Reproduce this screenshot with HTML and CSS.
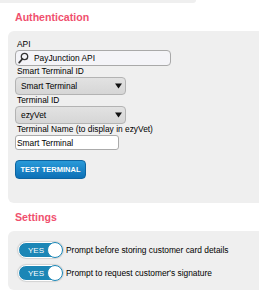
FILE: index.html
```html
<!DOCTYPE html>
<html lang="en">
<head>
  <meta charset="UTF-8">
  <title>Terminal Settings</title>
  <link rel="stylesheet" href="styles.css">
</head>
<body>

  <div class="prev-panel"></div>

  <h2 class="section-title">Authentication</h2>
  <div class="panel auth">
    <label class="field-label">API</label>
    <div class="search-input">
      <svg class="search-icon" width="11" height="12" viewBox="0 0 11 12">
        <circle cx="6.5" cy="4.5" r="3.2" fill="none" stroke="#333" stroke-width="1.3"/>
        <line x1="4.3" y1="7" x2="1.2" y2="10.6" stroke="#333" stroke-width="1.8" stroke-linecap="round"/>
      </svg>
      <span>PayJunction API</span>
    </div>

    <label class="field-label">Smart Terminal ID</label>
    <div class="select-box">
      <span>Smart Terminal</span>
      <svg class="arrow" width="7" height="6" viewBox="0 0 7 6"><polygon points="0,0.5 7,0.5 3.5,5.5" fill="#111"/></svg>
    </div>

    <label class="field-label">Terminal ID</label>
    <div class="select-box">
      <span>ezyVet</span>
      <svg class="arrow" width="7" height="6" viewBox="0 0 7 6"><polygon points="0,0.5 7,0.5 3.5,5.5" fill="#111"/></svg>
    </div>

    <label class="field-label">Terminal Name (to display in ezyVet)</label>
    <input class="text-input" type="text" value="Smart Terminal">

    <button class="btn-test">TEST TERMINAL</button>
  </div>

  <h2 class="section-title">Settings</h2>
  <div class="panel settings">
    <div class="toggle-row">
      <span class="toggle"><span class="toggle-text">YES</span><span class="knob"></span></span>
      <span class="toggle-label">Prompt before storing customer card details</span>
    </div>
    <div class="toggle-row">
      <span class="toggle"><span class="toggle-text">YES</span><span class="knob"></span></span>
      <span class="toggle-label">Prompt to request customer's signature</span>
    </div>
  </div>

</body>
</html>
```

FILE: styles.css
```css
* {
  box-sizing: border-box;
}

html, body {
  margin: 0;
  padding: 0;
  overflow: hidden;
  background: #fff;
  font-family: "Liberation Sans", Arial, sans-serif;
  color: #000;
}

.prev-panel {
  width: 196px;
  height: 3px;
  background: #efefef;
  border-radius: 0 0 6px 0;
}

.section-title {
  margin: 8px 0 8px 0;
  padding-left: 15px;
  font-size: 10.6px;
  line-height: 12px;
  font-weight: bold;
  color: #f0506e;
}

/* panels run off the right edge in the original, so only the left corners are round */
.panel {
  margin-left: 8px;
  background: #efefef;
  border-radius: 6px 0 0 6px;
}

.auth {
  padding: 8px 0 24px 7px;
}

.field-label {
  display: block;
  font-size: 8.4px;
  line-height: 11px;
  padding-left: 2px;
}

.search-input {
  display: flex;
  align-items: center;
  width: 156px;
  height: 16px;
  border: 1px solid #a9a9a9;
  border-radius: 4px;
  background: #f4f4f8;
  padding-left: 2px;
  font-size: 8.4px;
}

.search-icon {
  margin-right: 5px;
}

.select-box {
  display: flex;
  align-items: center;
  justify-content: space-between;
  width: 111px;
  height: 18px;
  border: 1px solid #b3b3b3;
  border-radius: 4px;
  background: linear-gradient(#e2e2e2, #d6d6d6);
  padding: 0 3px 0 5px;
  font-size: 8.4px;
}

.arrow {
  display: block;
}

.text-input {
  display: block;
  width: 104px;
  height: 15px;
  margin: 0;
  padding: 0 1px;
  border: 1px solid #ababab;
  border-radius: 3px;
  background: #fff;
  font-family: inherit;
  font-size: 8.4px;
  color: #000;
}

.btn-test {
  display: block;
  width: 71px;
  height: 19px;
  margin-top: 10px;
  padding: 0;
  border: 1px solid #0d64a0;
  border-radius: 4px;
  background: linear-gradient(#2a9ad9, #0c70b6);
  color: #fff;
  font-family: inherit;
  font-size: 7.5px;
  font-weight: bold;
}

.settings {
  padding: 11px 0 9px 10px;
}

.toggle-row {
  display: flex;
  align-items: center;
  height: 16px;
}

.toggle-row + .toggle-row {
  margin-top: 7px;
}

.toggle {
  position: relative;
  display: flex;
  align-items: center;
  width: 45px;
  height: 16px;
  border-radius: 8px;
  background: #1b86b6;
  border: 1px solid #fff;
  box-shadow: 0 0 1px 1px rgba(0, 0, 0, 0.12);
}

.toggle-text {
  padding-left: 9px;
  font-size: 8px;
  color: #fff;
}

.knob {
  position: absolute;
  right: -1px;
  top: -1px;
  width: 16px;
  height: 16px;
  border-radius: 50%;
  background: #fff;
  border: 1px solid #1b86b6;
}

.toggle-label {
  margin-left: 3px;
  font-size: 8.4px;
}
```
